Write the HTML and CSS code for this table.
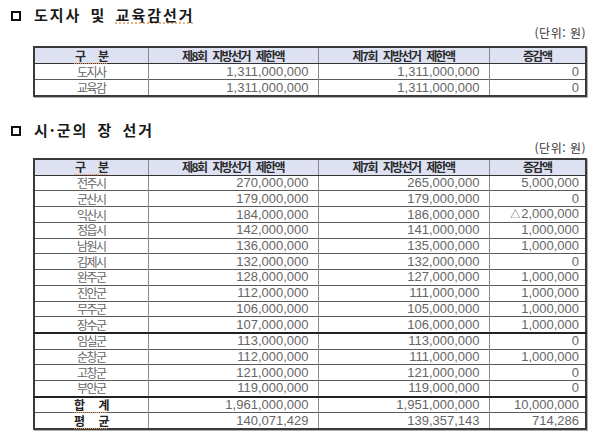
FILE: index.html
```html
<!DOCTYPE html>
<html lang="ko">
<head>
<meta charset="utf-8">
<link rel="stylesheet" href="styles.css">
</head>
<body>
<section class="sec sec1">
  <h2 class="title"><span class="bullet"></span><span class="ttext">도지사 및 <span class="sp">교육감선거</span></span></h2>
  <div class="unit">(단위: 원)</div>
  <table class="tbl t1">
    <colgroup><col class="c1"><col class="c2"><col class="c3"><col class="c4"></colgroup>
    <thead>
      <tr><th><span class="sp wide">구 분</span></th><th>제8회 지방선거 제한액</th><th>제7회 지방선거 제한액</th><th>증감액</th></tr>
    </thead>
    <tbody>
      <tr><td class="nm">도지사</td><td>1,311,000,000</td><td>1,311,000,000</td><td class="last">0</td></tr>
      <tr><td class="nm">교육감</td><td>1,311,000,000</td><td>1,311,000,000</td><td class="last">0</td></tr>
    </tbody>
  </table>
</section>
<section class="sec sec2">
  <h2 class="title"><span class="bullet"></span><span class="ttext">시·군의 장 선거</span></h2>
  <div class="unit">(단위: 원)</div>
  <table class="tbl t2">
    <colgroup><col class="c1"><col class="c2"><col class="c3"><col class="c4"></colgroup>
    <thead>
      <tr><th><span class="sp wide">구 분</span></th><th>제8회 지방선거 제한액</th><th>제7회 지방선거 제한액</th><th>증감액</th></tr>
    </thead>
    <tbody>
      <tr><td class="nm">전주시</td><td>270,000,000</td><td>265,000,000</td><td class="last">5,000,000</td></tr>
      <tr><td class="nm">군산시</td><td>179,000,000</td><td>179,000,000</td><td class="last">0</td></tr>
      <tr><td class="nm">익산시</td><td>184,000,000</td><td>186,000,000</td><td class="last"><span class="tri">△</span>2,000,000</td></tr>
      <tr><td class="nm">정읍시</td><td>142,000,000</td><td>141,000,000</td><td class="last">1,000,000</td></tr>
      <tr><td class="nm">남원시</td><td>136,000,000</td><td>135,000,000</td><td class="last">1,000,000</td></tr>
      <tr><td class="nm">김제시</td><td>132,000,000</td><td>132,000,000</td><td class="last">0</td></tr>
      <tr><td class="nm">완주군</td><td>128,000,000</td><td>127,000,000</td><td class="last">1,000,000</td></tr>
      <tr><td class="nm">진안군</td><td>112,000,000</td><td>111,000,000</td><td class="last">1,000,000</td></tr>
      <tr><td class="nm">무주군</td><td>106,000,000</td><td>105,000,000</td><td class="last">1,000,000</td></tr>
      <tr class="grp"><td class="nm">장수군</td><td>107,000,000</td><td>106,000,000</td><td class="last">1,000,000</td></tr>
      <tr><td class="nm">임실군</td><td>113,000,000</td><td>113,000,000</td><td class="last">0</td></tr>
      <tr><td class="nm">순창군</td><td>112,000,000</td><td>111,000,000</td><td class="last">1,000,000</td></tr>
      <tr><td class="nm">고창군</td><td>121,000,000</td><td>121,000,000</td><td class="last">0</td></tr>
      <tr class="grp"><td class="nm">부안군</td><td>119,000,000</td><td>119,000,000</td><td class="last">0</td></tr>
      <tr><td class="nm bold"><span class="sp wide">합 계</span></td><td>1,961,000,000</td><td>1,951,000,000</td><td class="last">10,000,000</td></tr>
      <tr><td class="nm bold"><span class="sp wide">평 균</span></td><td>140,071,429</td><td>139,357,143</td><td class="last">714,286</td></tr>
    </tbody>
  </table>
</section>
</body>
</html>
```
FILE: styles.css
```css
html, body {
  margin: 0;
  padding: 0;
  background: #fff;
}
body {
  width: 598px;
  height: 436px;
  overflow: hidden;
  font-family: "Noto Sans CJK KR", "Liberation Sans", sans-serif;
  color: #444;
}
.sec1 { padding-top: 5px; }
.sec2 { padding-top: 23px; }
.title {
  margin: 0;
  height: 20px;
  line-height: 20px;
  font-size: 15px;
  font-weight: bold;
  color: #1a1a1a;
  display: flex;
  align-items: center;
  padding-left: 11px;
}
.ttext {
  letter-spacing: 2px;
  word-spacing: 3px;
}
.bullet {
  display: inline-block;
  width: 6px;
  height: 6px;
  border: 2px solid #111;
  margin-right: 13px;
  margin-top: 1px;
}
.sp {
  text-decoration: underline dotted #e39a5a;
  text-underline-offset: 2px;
}
.wide {
  word-spacing: 12px;
}
.unit {
  height: 16px;
  line-height: 16px;
  font-size: 12px;
  color: #333;
  text-align: right;
  padding-right: 12px;
  letter-spacing: 0.5px;
}
.tbl {
  margin-left: 33px;
  width: 552px;
  border-collapse: collapse;
  border: 2px solid #3a3a3a;
  box-shadow: 1px 1px 0 #b0b0b0;
  table-layout: fixed;
}
.sec1 .tbl { margin-top: 5px; }
.sec2 .tbl { margin-top: 2px; }
.c1 { width: 114px; }
.c2 { width: 170px; }
.c3 { width: 171px; }
.c4 { width: 97px; }
.tbl th {
  background: #dde1f2;
  font-size: 12px;
  font-weight: bold;
  letter-spacing: -1.6px;
  word-spacing: 4px;
  color: #2a2a2a;
  text-align: center;
  border-bottom: 1px solid #333;
  border-left: 1px solid #888;
  padding: 0;
}
.tbl td {
  font-family: "Liberation Sans", "Noto Sans CJK KR", sans-serif;
  font-size: 13px;
  color: #666;
  text-align: right;
  padding: 0 9px 0 0;
  border-top: 1px solid #5a5a5a;
  border-left: 1px solid #8a8a8a;
  white-space: nowrap;
}
.t1 th, .t1 td { height: 15px; line-height: 15px; }
.t2 th, .t2 td { height: 14.7px; line-height: 14px; }
.tbl td.nm {
  font-family: "Noto Sans CJK KR", sans-serif;
  font-size: 12px;
  letter-spacing: -1.5px;
  text-align: center;
  padding: 0;
  color: #666;
}
.tbl td.nm.bold {
  font-weight: bold;
  color: #222;
  letter-spacing: -1px;
}
.tri {
  font-size: 10px;
  margin-right: 1px;
}
.tbl td.last { padding-right: 6px; }
.tbl tr.grp td { border-bottom: 2px solid #222; }
```
